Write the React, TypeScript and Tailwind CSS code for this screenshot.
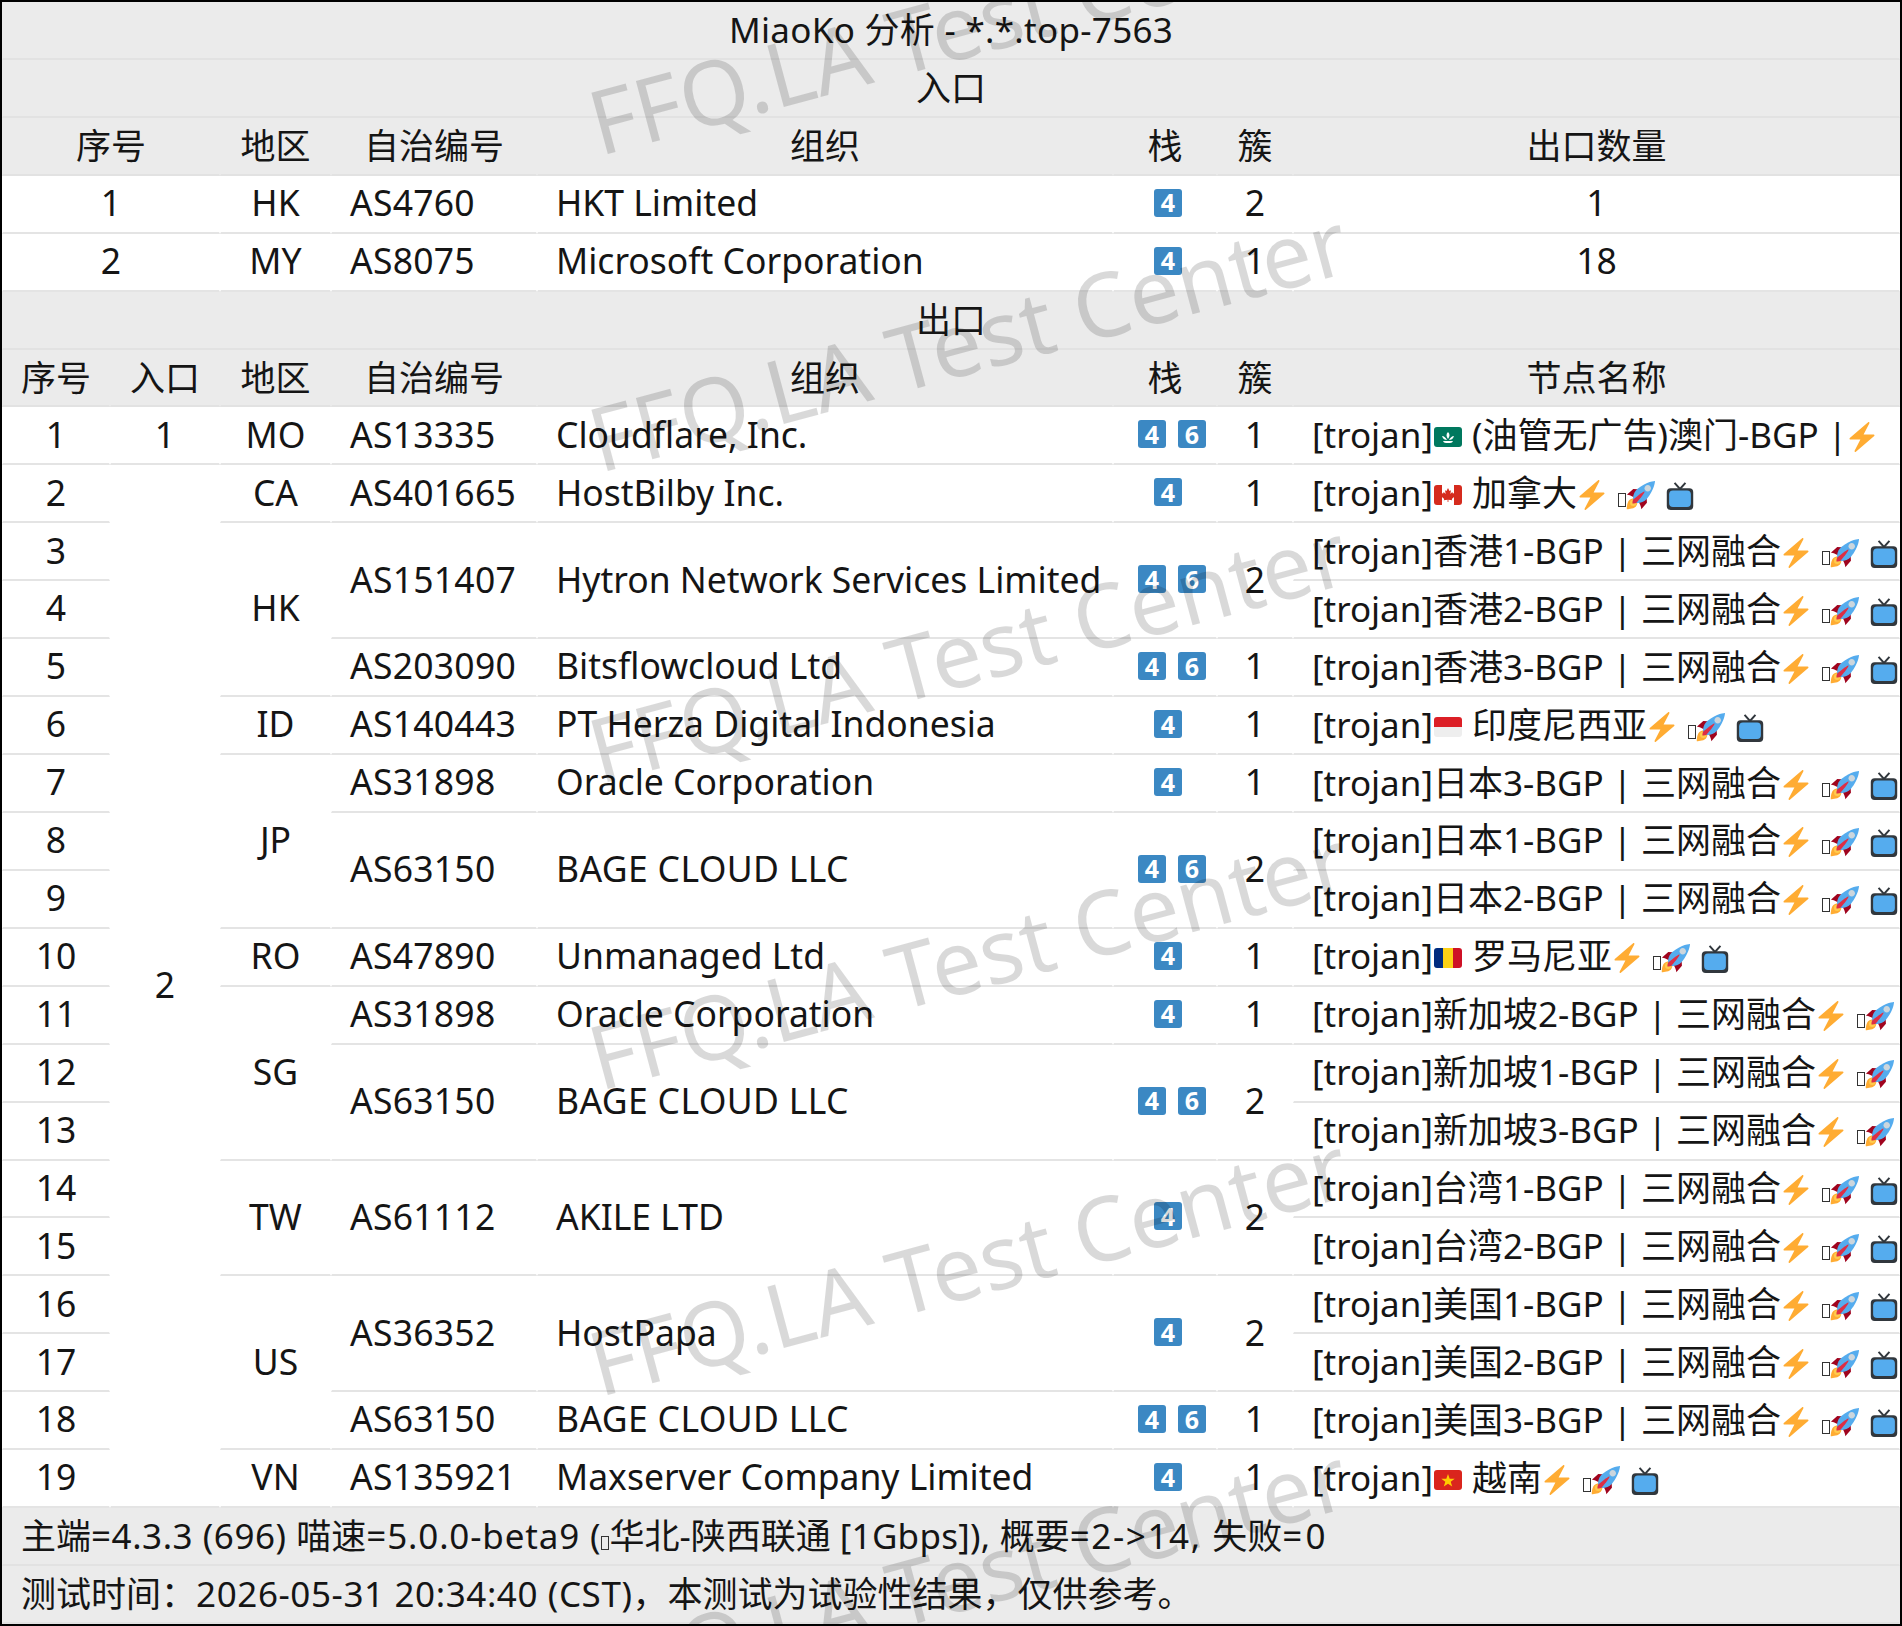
import type { ReactNode } from 'react'

const SPAN: Record<number, string> = { 1: '', 2: 'row-span-2', 3: 'row-span-3', 18: 'row-span-18' }

const Cell = ({ children, className = '', span = 1, gray = false }: { children?: ReactNode; className?: string; span?: number; gray?: boolean }) => (
  <div
    className={`${SPAN[span]} ${gray ? 'bg-[#ebebeb] border-b-[#e2e2e2] pb-[1px] text-[35px]' : 'border-b-[#e4e4e4] pb-[2px]'} ${className} flex items-center min-w-0 overflow-hidden whitespace-nowrap border-b-2 border-x border-x-transparent`}
  >
    {children}
  </div>
)

const Center = (p: { children?: ReactNode; className?: string; span?: number; gray?: boolean }) => (
  <Cell {...p} className={`justify-center ${p.className ?? ''}`} />
)
const Left = (p: { children?: ReactNode; className?: string; span?: number; gray?: boolean }) => (
  <Cell {...p} className={`pl-[18px] ${p.className ?? ''}`} />
)
const Asn = ({ children, span = 1 }: { children: ReactNode; span?: number }) => (
  <Left span={span} className="tracking-[0.25px]">{children}</Left>
)
const Bage = ({ span = 1 }: { span?: number }) => (
  <Left span={span} className="tracking-[0.35px]">BAGE CLOUD LLC</Left>
)

const Badge = ({ n }: { n: number }) => (
  <span className="flex h-7 w-7 items-center justify-center rounded-[3px] bg-[#3b88c3] font-['Open_Sans',sans-serif] text-[25px] font-bold leading-none text-white">{n}</span>
)

const Stack = ({ v, span = 1 }: { v: number[]; span?: number }) => (
  <Center span={span} className={`gap-3 ${v.length > 1 ? 'pl-[14px]' : 'pl-[6px]'}`}>
    {v.map(n => <Badge key={n} n={n} />)}
  </Center>
)

// twemoji style glyphs
const Zap = () => (
  <svg viewBox="0 0 36 36" className="inline-block h-[30px] w-[30px] align-[-4px]">
    <path fill="#FFAC33" d="M32.938 15.651C32.792 15.26 32.418 15 32 15H19.925L26.89 1.458c.219-.426.106-.947-.271-1.243C26.437.071 26.218 0 26 0c-.233 0-.466.082-.653.243L18 6.588 3.347 19.243c-.316.273-.43.714-.284 1.105S3.582 21 4 21h12.075L9.11 34.542c-.219.426-.106.947.271 1.243.182.144.401.215.619.215.233 0 .466-.082.653-.243L18 29.412l14.653-12.655c.317-.273.43-.714.285-1.106z" />
  </svg>
)

const Rocket = () => (
  <svg viewBox="0 0 36 36" className="inline-block h-[29px] w-[29px] align-[-4px]">
    <path fill="#A0041E" d="M1 17l8-7 16 1 1 16-7 8s.001-5.999-6-12-12-6-12-6z" />
    <path fill="#FFAC33" d="M.973 35s-.036-7.979 2.985-11S15 21.187 15 21.187 14.999 29 11.999 32c-3 3-11.026 3-11.026 3z" />
    <circle fill="#FFCC4D" cx="8.999" cy="27" r="4" />
    <path fill="#55ACEE" d="M35.999 0s-10 0-22 10c-6 5-6 14-4 16s11 2 16-4c10-12 10-22 10-22z" />
    <path fill="#CCD6DD" d="M26.999 5c-2.2 0-4 1.8-4 4s1.8 4 4 4 4-1.8 4-4-1.800-4-4-4z" />
    <path fill="#DD2E44" d="M8 28s0-4 1-5 13.001-10.999 14-10-9.001 13-10.001 14S8 28 8 28z" />
  </svg>
)

const Tv = () => (
  <svg viewBox="0 0 36 36" className="ml-[2px] inline-block h-7 w-7 align-[-4px]">
    <path stroke="#31373D" strokeWidth="2.5" fill="none" d="M11 1l7 8 7-8" />
    <rect fill="#31373D" x="1" y="8" width="34" height="28" rx="5" />
    <rect fill="#55ACEE" x="4" y="11" width="28" height="21" rx="5" />
  </svg>
)

const Tofu = ({ className = '' }: { className?: string }) => (
  <span className={`inline-block h-[14px] w-[8px] border border-[#333] align-[-1px] ${className}`} />
)

const Flag = ({ c }: { c: string }) => (
  <svg viewBox="0 0 28 20" className="ml-[1px] mr-[1px] inline-block h-5 w-7 align-[1px]">
    <clipPath id={`flag-${c}`}><rect width="28" height="20" rx="3" /></clipPath>
    <g clipPath={`url(#flag-${c})`}>
      {c === 'MO' && (
        <>
          <rect width="28" height="20" fill="#00785e" />
          <path fill="#fff" d="M14 5c-2 2-2 4 0 7 2-3 2-5 0-7zM8 9c1 3 3 4 5 4-1-2-3-4-5-4zM20 9c-1 3-3 4-5 4 1-2 3-4 5-4zM9 14h10c-1 2-2 2-5 2s-4 0-5-2z" />
        </>
      )}
      {c === 'CA' && (
        <>
          <rect width="28" height="20" fill="#fff" />
          <rect width="8" height="20" fill="#d52b1e" />
          <rect x="20" width="8" height="20" fill="#d52b1e" />
          <path fill="#d52b1e" d="M14 3l1.500 3 1.500-.8-.7 3.800 2-2 .6 1.500 2-.4-.7 2.400 1 .6-3.400 2.800.4 1.300-3.800-.5V17h-.8v-2.300l-3.800.5.400-1.300L6.800 11.100l1-.6-.7-2.400 2 .4.600-1.500 2 2-.7-3.800 1.500.8z" />
        </>
      )}
      {c === 'ID' && (
        <>
          <rect width="28" height="10" fill="#dc1f26" />
          <rect y="10" width="28" height="10" fill="#eeeeee" />
        </>
      )}
      {c === 'RO' && (
        <>
          <rect width="10" height="20" fill="#002b7f" />
          <rect x="9" width="10" height="20" fill="#fcd116" />
          <rect x="19" width="9" height="20" fill="#ce1126" />
        </>
      )}
      {c === 'VN' && (
        <>
          <rect width="28" height="20" fill="#da251d" />
          <path fill="#ffcd00" d="M14 4l1.700 4.700 5 .1-4 3 1.500 4.800-4.200-2.900-4.200 2.900 1.500-4.800-4-3 5-.1z" />
        </>
      )}
    </g>
  </svg>
)

const Tail = () => (
  <>
    <Zap />{' '}
    <Tofu className="ml-[2px]" />
    <Rocket />{' '}
    <Tv />
  </>
)

const FlagNode = ({ c, name }: { c: string; name: string }) => (
  <Left className="text-[35px]">
    <span>[trojan]<Flag c={c} /> {name}<Tail /></span>
  </Left>
)

const TextNode = ({ name }: { name: string }) => (
  <Left className="text-[35px]">
    <span>[trojan]{name}-BGP | 三网融合<Tail /></span>
  </Left>
)

const Full = ({ children, className = '' }: { children: ReactNode; className?: string }) => (
  <Cell gray className={`col-span-8 ${className}`}>{children}</Cell>
)

const Seq = ({ n }: { n: number }) => <Center>{n}</Center>

const WATERMARKS = [75, 392, 703, 1010, 1316, 1627]

export default function App() {
  return (
    <div className="relative box-border h-[1626px] w-[1902px] overflow-hidden border-2 border-black bg-white font-['Noto_Sans','Noto_Sans_CJK_SC',sans-serif] text-[35.5px] leading-none text-[#151515]">
      <div className="grid h-full grid-cols-[108px_110px_111px_206px_576px_104px_76px_1fr] grid-rows-[repeat(28,minmax(0,1fr))]">
        <Full className="justify-center tracking-[0.3px]">MiaoKo 分析 - *.*.top-7563</Full>
        <Full className="justify-center">入口</Full>

        {/* entry table */}
        <Center gray className="col-span-2">序号</Center>
        <Center gray>地区</Center>
        <Center gray>自治编号</Center>
        <Center gray>组织</Center>
        <Center gray>栈</Center>
        <Center gray>簇</Center>
        <Center gray>出口数量</Center>

        <Center className="col-span-2">1</Center>
        <Center>HK</Center>
        <Asn>AS4760</Asn>
        <Left>HKT Limited</Left>
        <Stack v={[4]} />
        <Center>2</Center>
        <Center>1</Center>

        <Center className="col-span-2">2</Center>
        <Center>MY</Center>
        <Asn>AS8075</Asn>
        <Left>Microsoft Corporation</Left>
        <Stack v={[4]} />
        <Center>1</Center>
        <Center>18</Center>

        <Full className="justify-center">出口</Full>

        {/* exit table */}
        <Center gray>序号</Center>
        <Center gray>入口</Center>
        <Center gray>地区</Center>
        <Center gray>自治编号</Center>
        <Center gray>组织</Center>
        <Center gray>栈</Center>
        <Center gray>簇</Center>
        <Center gray>节点名称</Center>

        <Seq n={1} />
        <Center>1</Center>
        <Center>MO</Center>
        <Asn>AS13335</Asn>
        <Left>Cloudflare, Inc.</Left>
        <Stack v={[4, 6]} />
        <Center>1</Center>
        <Left className="text-[35px]"><span>[trojan]<Flag c="MO" /> (油管无广告)澳门-BGP |<Zap /></span></Left>

        <Seq n={2} />
        <Center span={18}>2</Center>
        <Center>CA</Center>
        <Asn>AS401665</Asn>
        <Left>HostBilby Inc.</Left>
        <Stack v={[4]} />
        <Center>1</Center>
        <FlagNode c="CA" name="加拿大" />

        <Seq n={3} />
        <Center span={3}>HK</Center>
        <Asn span={2}>AS151407</Asn>
        <Left span={2}>Hytron Network Services Limited</Left>
        <Stack v={[4, 6]} span={2} />
        <Center span={2}>2</Center>
        <TextNode name="香港1" />

        <Seq n={4} />
        <TextNode name="香港2" />

        <Seq n={5} />
        <Asn>AS203090</Asn>
        <Left>Bitsflowcloud Ltd</Left>
        <Stack v={[4, 6]} />
        <Center>1</Center>
        <TextNode name="香港3" />

        <Seq n={6} />
        <Center>ID</Center>
        <Asn>AS140443</Asn>
        <Left>PT Herza Digital Indonesia</Left>
        <Stack v={[4]} />
        <Center>1</Center>
        <FlagNode c="ID" name="印度尼西亚" />

        <Seq n={7} />
        <Center span={3}>JP</Center>
        <Asn>AS31898</Asn>
        <Left>Oracle Corporation</Left>
        <Stack v={[4]} />
        <Center>1</Center>
        <TextNode name="日本3" />

        <Seq n={8} />
        <Asn span={2}>AS63150</Asn>
        <Bage span={2} />
        <Stack v={[4, 6]} span={2} />
        <Center span={2}>2</Center>
        <TextNode name="日本1" />

        <Seq n={9} />
        <TextNode name="日本2" />

        <Seq n={10} />
        <Center>RO</Center>
        <Asn>AS47890</Asn>
        <Left>Unmanaged Ltd</Left>
        <Stack v={[4]} />
        <Center>1</Center>
        <FlagNode c="RO" name="罗马尼亚" />

        <Seq n={11} />
        <Center span={3}>SG</Center>
        <Asn>AS31898</Asn>
        <Left>Oracle Corporation</Left>
        <Stack v={[4]} />
        <Center>1</Center>
        <TextNode name="新加坡2" />

        <Seq n={12} />
        <Asn span={2}>AS63150</Asn>
        <Bage span={2} />
        <Stack v={[4, 6]} span={2} />
        <Center span={2}>2</Center>
        <TextNode name="新加坡1" />

        <Seq n={13} />
        <TextNode name="新加坡3" />

        <Seq n={14} />
        <Center span={2}>TW</Center>
        <Asn span={2}>AS61112</Asn>
        <Left span={2}>AKILE LTD</Left>
        <Stack v={[4]} span={2} />
        <Center span={2}>2</Center>
        <TextNode name="台湾1" />

        <Seq n={15} />
        <TextNode name="台湾2" />

        <Seq n={16} />
        <Center span={3}>US</Center>
        <Asn span={2}>AS36352</Asn>
        <Left span={2}>HostPapa</Left>
        <Stack v={[4]} span={2} />
        <Center span={2}>2</Center>
        <TextNode name="美国1" />

        <Seq n={17} />
        <TextNode name="美国2" />

        <Seq n={18} />
        <Asn>AS63150</Asn>
        <Bage />
        <Stack v={[4, 6]} />
        <Center>1</Center>
        <TextNode name="美国3" />

        <Seq n={19} />
        <Center>VN</Center>
        <Asn>AS135921</Asn>
        <Left>Maxserver Company Limited</Left>
        <Stack v={[4]} />
        <Center>1</Center>
        <FlagNode c="VN" name="越南" />

        <Full className="pl-[18px]">
          <span>
            主端<span className="tracking-[0.55px]">=4.3.3 (696) </span>喵速<span className="tracking-[0.85px]">=5.0.0-beta9 (</span><Tofu />华北-陕西联通 <span className="tracking-[0.25px]">[1Gbps]), </span>概要<span className="tracking-[1.6px]">=2-&gt;14, </span>失败<span className="tracking-[3.2px]">=0</span>
          </span>
        </Full>
        <Full className="pl-[18px]">
          <span>测试时间：<span className="tracking-[0.6px]">2026-05-31 20:34:40 (CST)</span>，本测试为试验性结果，仅供参考。</span>
        </Full>
      </div>

      {/* watermark */}
      {WATERMARKS.map(y => (
        <div
          key={y}
          className="pointer-events-none absolute left-[600px] origin-bottom-left -rotate-[15deg] whitespace-nowrap text-[89px] leading-none text-black/15"
          style={{ top: y }}
        >
          FFQ.LA Test Center
        </div>
      ))}
    </div>
  )
}
